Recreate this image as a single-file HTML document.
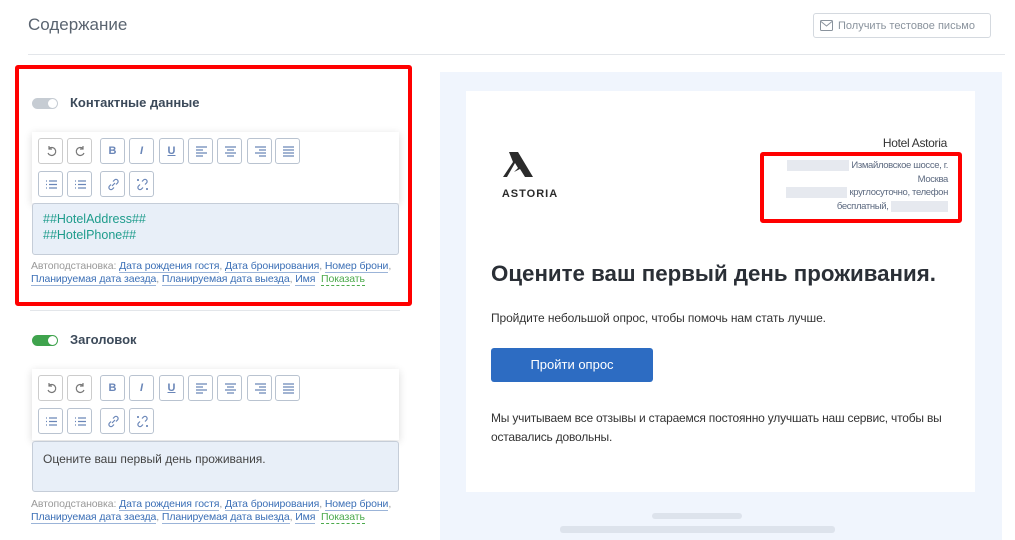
<!DOCTYPE html>
<html><head><meta charset="utf-8"><style>
*{box-sizing:border-box;margin:0;padding:0}
body{width:1015px;height:540px;overflow:hidden;background:#fff;font-family:"Liberation Sans",sans-serif;position:relative;color:#333}
.a{position:absolute}
.title{left:28px;top:15px;font-size:17px;color:#5a6470}
.btn{left:813px;top:13px;width:178px;height:25px;border:1px solid #d4d9df;border-radius:3px;font-size:11px;color:#8a939d;padding:6px 0 0 24px;white-space:nowrap}
.hr{left:28px;top:54px;width:977px;height:1px;background:#e3e6ea}
.red{border:4px solid #f00;border-radius:3px}
.tog{width:26px;height:11px;border-radius:6px}
.tog::after{content:"";position:absolute;right:1px;top:1px;width:9px;height:9px;border-radius:50%;background:#fff}
.lbl{font-size:13px;font-weight:bold;color:#3c4a5a}
.tb{background:#fff;box-shadow:0 2px 8px rgba(0,0,0,.15);width:367px;height:71px}
.b{width:25px;height:26px;border:1px solid #b9c3d0;border-radius:3px;background:#fff;font-size:11px;color:#6a86b8;text-align:center;line-height:24px;font-weight:bold}
.b svg{position:absolute;left:6px;top:6px}
.ta{width:367px;height:52px;background:#e8eff8;border:1px solid #c5cdd8;border-radius:3px;font-size:12.5px;line-height:16px;padding:7px 10px}
.auto{font-size:10.5px;color:#999;line-height:13px;width:380px;letter-spacing:-0.1px}
.auto u{color:#3b6fb6;text-decoration:none;border-bottom:1px solid #9bb4d8}
.auto .s{color:#4caa4c;border-bottom:1px dashed #4caa4c}
.bl{background:#e6e9ef;color:transparent}
</style></head><body>
<div class="a title">Содержание</div>
<div class="a btn"><svg class="a" style="left:6px;top:6px" width="13" height="11" viewBox="0 0 13 11"><rect x="0.5" y="0.5" width="12" height="10" rx="1" fill="none" stroke="#8a939d"/><path d="M1 1.5l5.5 4.5 5.5-4.5" fill="none" stroke="#8a939d"/></svg>Получить тестовое письмо</div>
<div class="a hr"></div>

<div class="a red" style="left:15px;top:65px;width:397px;height:241px"></div>
<div class="a tog" style="left:32px;top:98px;background:#c6ccd3"></div>
<div class="a lbl" style="left:70px;top:95px">Контактные данные</div>

<div class="a" style="left:30px;top:310px;width:370px;height:1px;background:#e3e6ea"></div>
<div class="a tog" style="left:32px;top:335px;background:#3fa34d"></div>
<div class="a lbl" style="left:70px;top:332px">Заголовок</div>

<div id="t1" class="a tb" style="left:32px;top:132px"></div>
<div class="a ta" style="left:32px;top:203px;color:#1e9c8c">##HotelAddress##<br>##HotelPhone##</div>
<div class="a auto" style="left:31px;top:260px">Автоподстановка: <u>Дата рождения гостя</u>, <u>Дата бронирования</u>, <u>Номер брони</u>,<br><u>Планируемая дата заезда</u>, <u>Планируемая дата выезда</u>, <u>Имя</u> &nbsp;<span class="s">Показать</span></div>

<div id="t2" class="a tb" style="left:32px;top:369px"></div>
<div class="a ta" style="left:32px;top:441px;color:#444;font-size:12px;padding-top:9px;height:51px">Оцените ваш первый день проживания.</div>
<div class="a auto" style="left:31px;top:498px">Автоподстановка: <u>Дата рождения гостя</u>, <u>Дата бронирования</u>, <u>Номер брони</u>,<br><u>Планируемая дата заезда</u>, <u>Планируемая дата выезда</u>, <u>Имя</u> &nbsp;<span class="s">Показать</span></div>

<script>
const C='#6a86b8';
function sv(d,c){return `<svg width="13" height="13" viewBox="0 0 13 13"><path d="${d}" fill="none" stroke="${c||C}" stroke-width="1.2"/></svg>`;}
const icons=[
 sv('M4 3.5a4 4 0 1 1-1 4.5M4 1v3h3','#777'),
 sv('M9 3.5a4 4 0 1 0 1 4.5M9 1v3h-3','#777'),
 'B','<i>I</i>','<u>U</u>',
 sv('M1 2h11M1 5h7M1 8h11M1 11h7'),
 sv('M1 2h11M3 5h7M1 8h11M3 11h7'),
 sv('M1 2h11M5 5h7M1 8h11M5 11h7'),
 sv('M1 2h11M1 5h11M1 8h11M1 11h11')];
const xs=[6,35,68,97,127,156,185,215,243];
const r2=[6,35,68,97];
const i2=[sv('M1 3h1M4 3h8M1 6.5h1M4 6.5h8M1 10h1M4 10h8'),sv('M1 3h1M4 3h8M1 6.5h1M4 6.5h8M1 10h1M4 10h8'),
 sv('M5 8l3-3M6 3.5l1.5-1.5a2 2 0 0 1 3 3L9 6.5M7 9.5L5.5 11a2 2 0 0 1-3-3L4 6.5'),
 sv('M6 3.5l1.5-1.5a2 2 0 0 1 3 3L9 6.5M7 9.5L5.5 11a2 2 0 0 1-3-3L4 6.5M2 1v2M1 2h2M11 10v2M10 11h2')];
['t1','t2'].forEach(id=>{const t=document.getElementById(id);let h='';
xs.forEach((x,i)=>h+=`<div class="a b" style="left:${x}px;top:6px;${i<2?'border-color:#ccc':''}">${icons[i]}</div>`);
r2.forEach((x,i)=>h+=`<div class="a b" style="left:${x}px;top:39px">${i2[i]}</div>`);
t.innerHTML=h;});
</script>

<div class="a" style="left:440px;top:72px;width:562px;height:468px;background:#f0f5fd"></div>
<div class="a" style="left:466px;top:91px;width:509px;height:401px;background:#fff"></div>
<svg class="a" style="left:497px;top:150px" width="66" height="50" viewBox="0 0 66 50">
<path d="M12 2h9l15 25h-8l-5-8-6 3 4-4-3-5-8 14h-4l10-15z" fill="#2b2b2b"/>
<text x="33" y="47" font-family="Liberation Sans" font-size="11" font-weight="bold" text-anchor="middle" fill="#2b2b2b" letter-spacing="1">ASTORIA</text></svg>
<div class="a" style="left:800px;top:136px;width:147px;text-align:right;font-size:12px;color:#333;letter-spacing:-0.3px">Hotel Astoria</div>
<div class="a red" style="left:760px;top:152px;width:202px;height:71px"></div>
<div class="a" style="left:766px;top:159px;width:182px;text-align:right;font-size:9.5px;line-height:13.5px;color:#5d6a80;letter-spacing:-0.35px;white-space:nowrap">
<span class="bl">xxxxxxxxxxxxxx</span> Измайловское шоссе, г.<br>Москва<br><span class="bl">xxxxxxxxxxxxxx</span> круглосуточно, телефон<br>бесплатный, <span class="bl">xxxxxxxxxxxxx</span></div>
<div class="a" style="left:491px;top:261px;font-size:22.3px;font-weight:bold;color:#2a2f36">Оцените ваш первый день проживания.</div>
<div class="a" style="left:491px;top:311px;font-size:12px;color:#333;letter-spacing:-0.1px">Пройдите небольшой опрос, чтобы помочь нам стать лучше.</div>
<div class="a" style="left:491px;top:348px;width:162px;height:34px;background:#2d6cc2;border-radius:3px;color:#fff;font-size:13px;text-align:center;line-height:34px">Пройти опрос</div>
<div class="a" style="left:491px;top:409px;font-size:12px;line-height:19px;color:#333;width:470px;letter-spacing:-0.2px">Мы учитываем все отзывы и стараемся постоянно улучшать наш сервис, чтобы вы оставались довольны.</div>
<div class="a" style="left:652px;top:513px;width:90px;height:6px;background:#dde3ec;border-radius:3px"></div>
<div class="a" style="left:560px;top:526px;width:275px;height:7px;background:#dde3ec;border-radius:3px"></div>
</body></html>
